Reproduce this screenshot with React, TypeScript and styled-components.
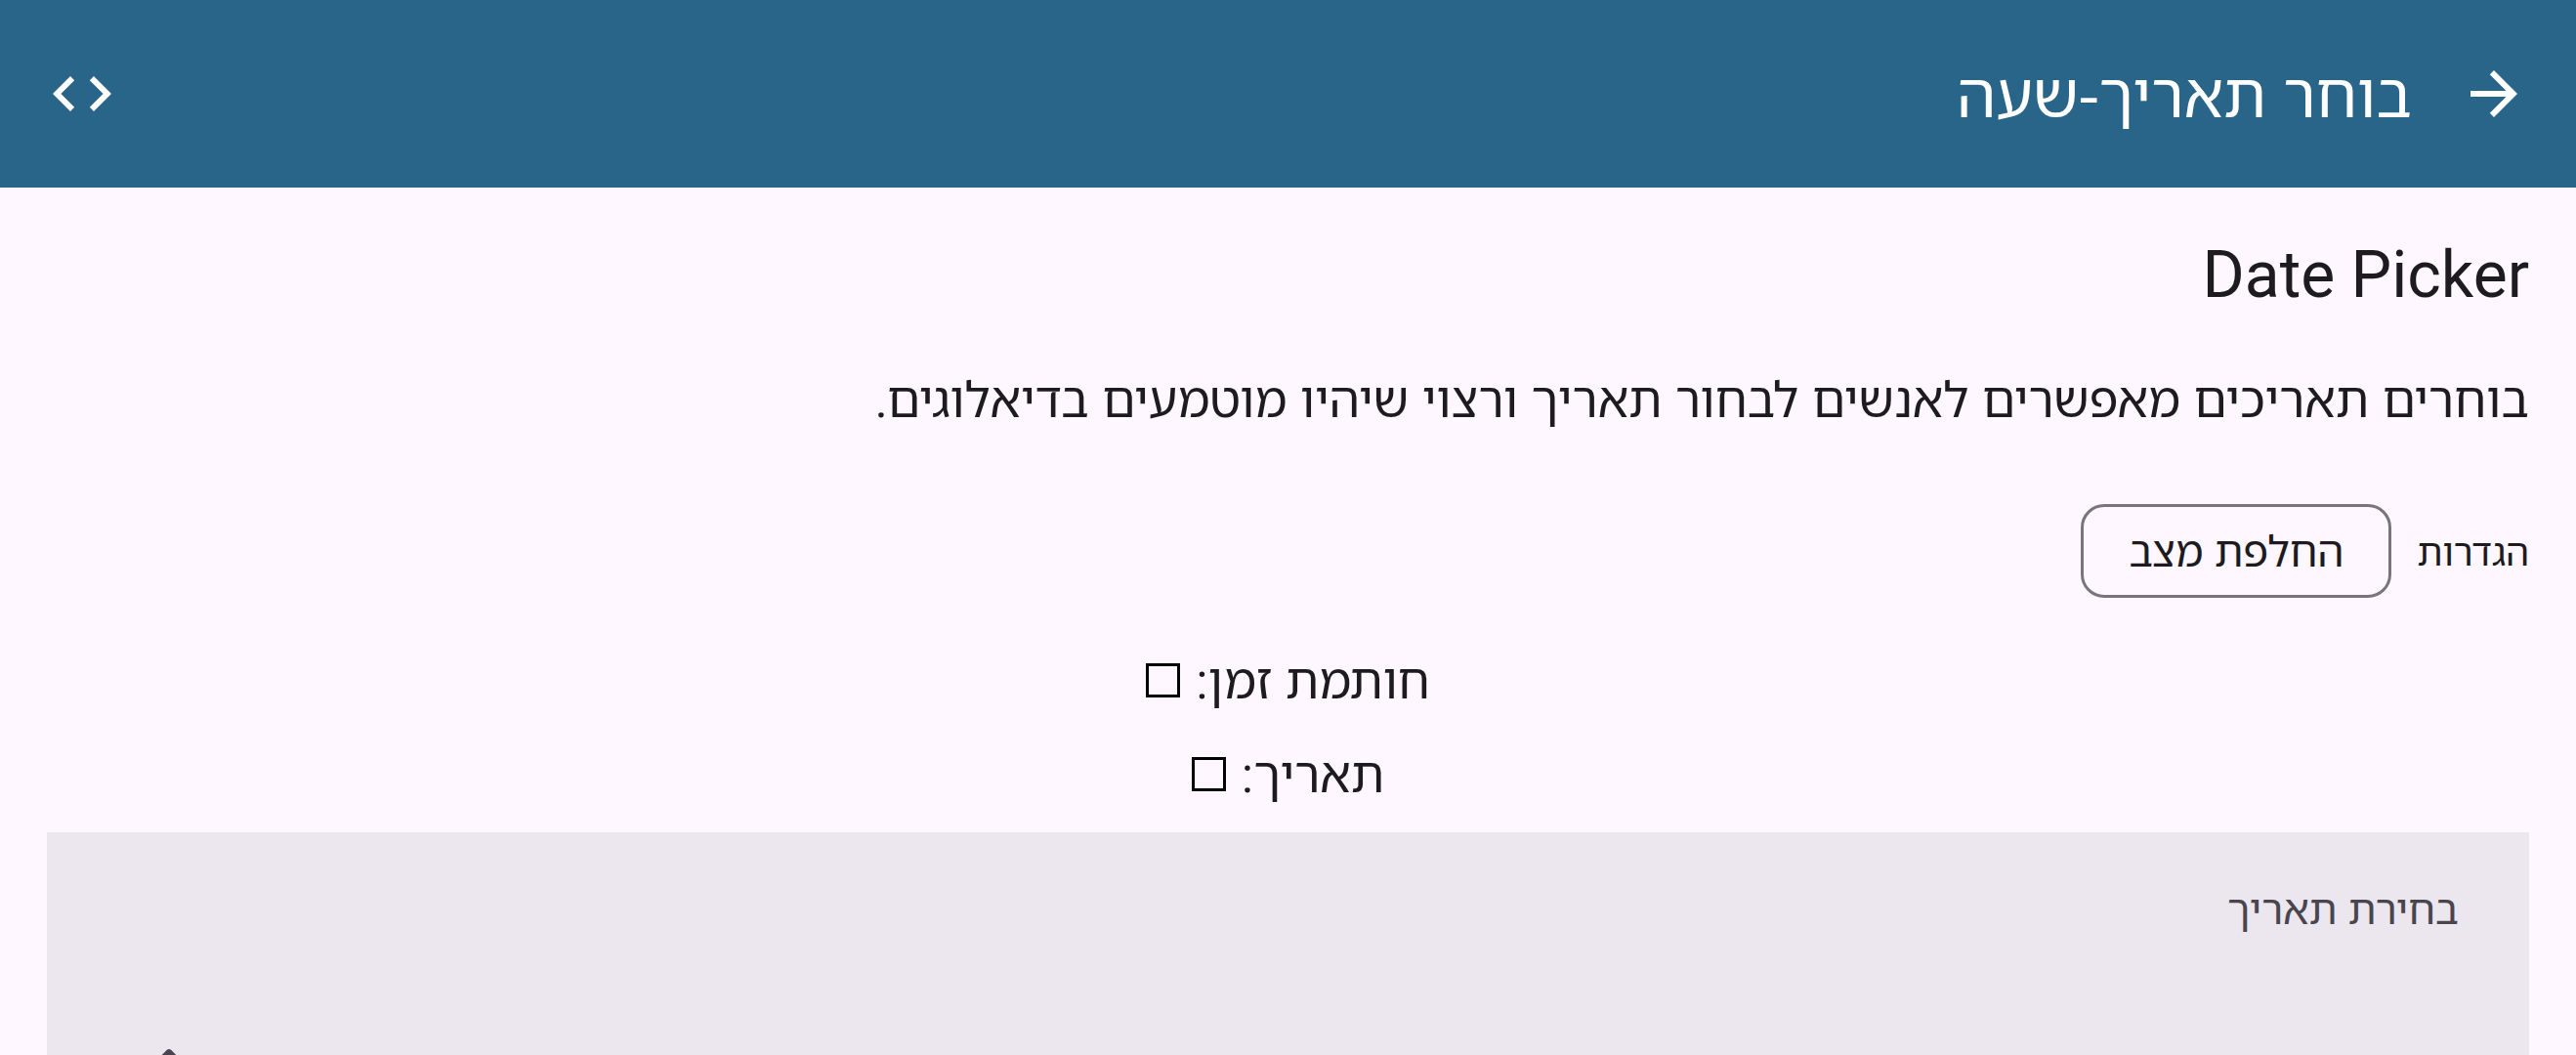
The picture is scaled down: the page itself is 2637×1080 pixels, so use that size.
import React from "react";
import styled, { createGlobalStyle } from "styled-components";

const GlobalStyle = createGlobalStyle`
  *, *::before, *::after { box-sizing: border-box; }
  body {
    margin: 0;
    background: #fef7ff;
    color: #1d1b20;
    font-family: "Noto Sans Hebrew", "Noto Sans", "Open Sans", sans-serif;
  }
`;

const Screen = styled.div`
  display: flex;
  flex-direction: column;
  height: 100vh;
  overflow: hidden;
`;

const AppBar = styled.header`
  display: flex;
  align-items: center;
  gap: 48px;
  flex: none;
  padding: 54px 48px;
  background: #296588;
  color: #ffffff;
`;

const AppTitle = styled.h1`
  flex: 1;
  margin: 0;
  font-size: 64px;
  font-weight: 400;
  line-height: 84px;
`;

const IconButton = styled.button`
  display: flex;
  flex: none;
  padding: 0;
  border: 0;
  background: none;
  color: inherit;
  cursor: pointer;
`;

const Icon = styled.svg`
  display: block;
  width: 72px;
  height: 72px;
  fill: currentColor;
`;

const Content = styled.main`
  display: flex;
  flex: 1;
  flex-direction: column;
  gap: 48px;
  padding: 48px 48px 0;
`;

const Heading = styled.h2`
  margin: 0;
  font-family: Roboto, sans-serif;
  font-size: 66px;
  font-weight: 400;
  line-height: 84px;
`;

const Description = styled.p`
  margin: 0;
  font-size: 50px;
  line-height: 72px;
`;

const Settings = styled.div`
  display: flex;
  align-items: center;
  gap: 26px;
  padding-top: 24px;
`;

const SettingsLabel = styled.span`
  font-size: 38px;
  line-height: 48px;
`;

const Chip = styled.button`
  padding: 15px 46px;
  border: 3px solid #79747e;
  border-radius: 24px;
  background: none;
  color: inherit;
  font: inherit;
  font-size: 43px;
  line-height: 60px;
  cursor: pointer;
`;

const Picker = styled.section`
  display: flex;
  flex: 1;
  flex-direction: column;
  gap: 24px;
`;

const Status = styled.label`
  display: flex;
  align-items: center;
  align-self: center;
  gap: 16px;
  font-size: 50px;
  line-height: 72px;
`;

const CheckBox = styled.input`
  appearance: none;
  width: 35px;
  height: 35px;
  margin: 0;
  border: 3px solid currentColor;
  &:checked { background: currentColor; }
`;

const Card = styled.div`
  flex: 1;
  padding: 48px 72px;
  background: #ece6ee;
  color: #49454f;
`;

const CardTitle = styled.h3`
  margin: 0;
  font-size: 42px;
  font-weight: 400;
  line-height: 60px;
`;

const CardActions = styled.div`
  display: flex;
  justify-content: flex-end;
  padding-top: 105px;
`;

const statuses = ["חותמת זמן:", "תאריך:"];

export default function App() {
  return (
    <Screen dir="rtl" lang="he">
      <GlobalStyle />
      <AppBar>
        <IconButton type="button" aria-label="חזרה">
          <Icon viewBox="0 0 24 24" aria-hidden="true">
            <path d="M12 4l-1.41 1.41L16.17 11H4v2h12.17l-5.58 5.59L12 20l8-8z" />
          </Icon>
        </IconButton>
        <AppTitle>בוחר תאריך-שעה</AppTitle>
        <IconButton type="button" aria-label="קוד">
          <Icon viewBox="0 0 24 24" aria-hidden="true">
            <path d="M9.4 16.6L4.8 12l4.6-4.6L8 6l-6 6 6 6 1.4-1.4zm5.2 0l4.6-4.6-4.6-4.6L16 6l6 6-6 6-1.4-1.4z" />
          </Icon>
        </IconButton>
      </AppBar>
      <Content>
        <Heading>Date Picker</Heading>
        <Description>
          בוחרים תאריכים מאפשרים לאנשים לבחור תאריך ורצוי שיהיו מוטמעים בדיאלוגים.
        </Description>
        <Settings>
          <SettingsLabel>הגדרות</SettingsLabel>
          <Chip type="button">החלפת מצב</Chip>
        </Settings>
        <Picker>
          {statuses.map((text) => (
            <Status key={text}>
              {text}
              <CheckBox type="checkbox" />
            </Status>
          ))}
          <Card>
            <CardTitle>בחירת תאריך</CardTitle>
            <CardActions>
              <IconButton type="button" aria-label="עריכה">
                <Icon viewBox="0 0 24 24" aria-hidden="true">
                  <path d="M14.06 9.02l.92.92L5.92 19H5v-.92l9.06-9.06M17.66 3c-.25 0-.51.1-.7.29l-1.83 1.83 3.75 3.75 1.83-1.83c.39-.39.39-1.02 0-1.41l-2.34-2.34c-.2-.2-.45-.29-.71-.29zm-3.6 3.19L3 17.25V21h3.75L17.81 9.94l-3.75-3.75z" />
                </Icon>
              </IconButton>
            </CardActions>
          </Card>
        </Picker>
      </Content>
    </Screen>
  );
}
